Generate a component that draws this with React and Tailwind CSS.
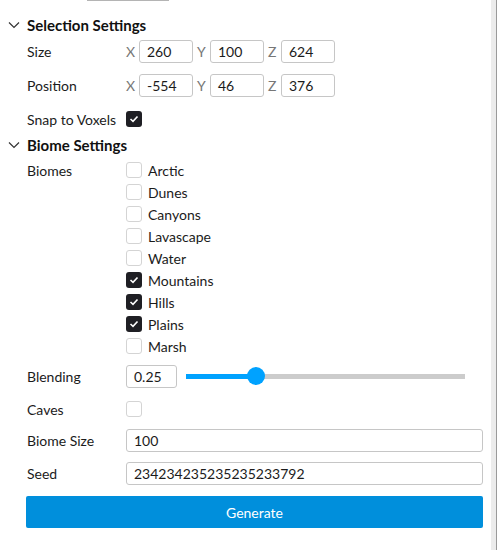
import { useState } from "react";

function Chevron() {
  return (
    <svg width="12" height="8" viewBox="0 0 12 8" className="shrink-0">
      <path d="M1 1.5 L6 6.5 L11 1.5" fill="none" stroke="#333" strokeWidth="1.2" />
    </svg>
  );
}

function Check({ checked }) {
  return (
    <div
      className={
        "w-4 h-4 rounded-[3px] flex items-center justify-center shrink-0 " +
        (checked ? "bg-[#1f1f24]" : "border border-[#d4d4d4] bg-white")
      }
    >
      {checked && (
        <svg width="10" height="8" viewBox="0 0 10 8">
          <path d="M1.5 4 L4 6.3 L8.5 1.5" fill="none" stroke="white" strokeWidth="1.6" />
        </svg>
      )}
    </div>
  );
}

function Box({ value, className = "" }) {
  return (
    <div
      className={
        "h-[23px] border border-[#c6c6c6] rounded-[3px] bg-white flex items-center px-[7px] text-[14px] text-[#1b1b1b] shrink-0 " +
        className
      }
    >
      {value}
    </div>
  );
}

function Header({ title }) {
  return (
    <div className="flex items-center h-[26px] pl-[8px] gap-[7px]">
      <Chevron />
      <span className="font-bold text-[15px] text-[#111]">{title}</span>
    </div>
  );
}

function Row({ label, children, h = "h-[26px]" }) {
  return (
    <div className={"flex items-center pl-[27px] pr-[8px] " + h}>
      <div className="w-[99px] shrink-0 text-[14px] text-[#1b1b1b]">{label}</div>
      <div className="flex-1 flex items-center">{children}</div>
    </div>
  );
}

function Vec({ x, y, z }) {
  const axes = [
    ["X", x],
    ["Y", y],
    ["Z", z],
  ];
  return (
    <div className="flex items-center gap-[4px]">
      {axes.map(([a, v]) => (
        <div key={a} className="flex items-center gap-[5px]">
          <span className="text-[14px] text-[#777] w-[8px]">{a}</span>
          <Box value={v} className="w-[54px]" />
        </div>
      ))}
    </div>
  );
}

const biomes = [
  ["Arctic", false],
  ["Dunes", false],
  ["Canyons", false],
  ["Lavascape", false],
  ["Water", false],
  ["Mountains", true],
  ["Hills", true],
  ["Plains", true],
  ["Marsh", false],
];

export default function App() {
  const [blend] = useState(0.25);
  return (
    <div
      className="w-[497px] h-[550px] bg-white flex overflow-hidden"
      style={{ fontFamily: "Lato, 'Noto Sans', sans-serif" }}
    >
      <div className="flex-1 flex flex-col">
        <div className="h-[12px]">
          <div className="ml-[87px] w-[82px] h-[1px] bg-[#b4b4b4]" />
        </div>
        <Header title="Selection Settings" />
        <div className="flex flex-col gap-[8px]">
          <Row label="Size">
            <Vec x="260" y="100" z="624" />
          </Row>
          <Row label="Position">
            <Vec x="-554" y="46" z="376" />
          </Row>
          <Row label="Snap to Voxels">
            <Check checked />
          </Row>
        </div>
        <Header title="Biome Settings" />
        <div className="flex pl-[27px] pt-[1px]">
          <div className="w-[99px] shrink-0 text-[14px] text-[#1b1b1b] h-[22px] flex items-center">Biomes</div>
          <div className="flex flex-col">
            {biomes.map(([name, on]) => (
              <div key={name} className="h-[22px] flex items-center gap-[6px]">
                <Check checked={on} />
                <span className="text-[14px] text-[#1b1b1b]">{name}</span>
              </div>
            ))}
          </div>
        </div>
        <div className="h-[6px]" />
        <Row label="Blending">
          <Box value="0.25" className="w-[51px]" />
          <div className="ml-[9px] w-[279px] h-[5px] bg-[#cccccc] relative">
            <div className="absolute left-0 top-0 h-[5px] bg-[#00a2ff]" style={{ width: `${blend * 279}px` }} />
            <div
              className="absolute top-[-6.5px] w-[18px] h-[18px] rounded-full bg-[#00a2ff]"
              style={{ left: `${blend * 279 - 9}px` }}
            />
          </div>
        </Row>
        <Row label="Caves" h="h-[40px]">
          <Check />
        </Row>
        <Row label="Biome Size" h="h-[22px]">
          <Box value="100" className="w-full" />
        </Row>
        <Row label="Seed" h="h-[44px]">
          <Box value="234234235235235233792" className="w-full" />
        </Row>
        <div className="pl-[26px] pr-[8px] pt-[1px]">
          <div className="h-[32px] bg-[#008fdc] rounded-[2px] flex items-center justify-center text-white text-[14px]">
            Generate
          </div>
        </div>
      </div>
      <div className="w-[6px] flex">
        <div className="w-[5px] bg-[#ececec]" />
        <div className="w-[1px] bg-[#9a9a9a]" />
      </div>
    </div>
  );
}
